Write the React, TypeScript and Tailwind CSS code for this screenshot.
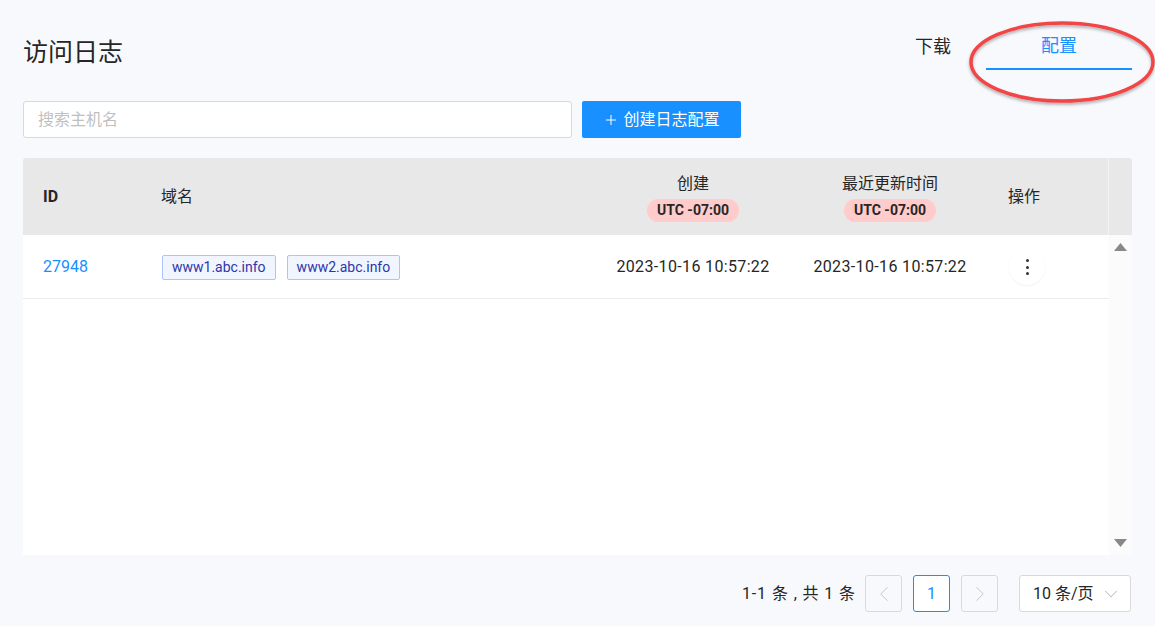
import React from "react";
import { ChevronLeft, ChevronRight, ChevronDown, Plus } from "lucide-react";

const FONT = 'Roboto, "Noto Sans CJK SC", "Noto Sans", sans-serif';

function Badge() {
  return (
    <span className="inline-flex h-[23px] items-center rounded-full bg-[#ffcccb] px-[10px] text-[14px] font-bold leading-none text-[#262626]">
      UTC -07:00
    </span>
  );
}

function Tag({ children }: { children: React.ReactNode }) {
  return (
    <span className="inline-flex h-[25px] items-center rounded-[2px] border border-[#a9c4ff] bg-[#f0f5ff] px-[9px] text-[14px] text-[#2f35a8]">
      {children}
    </span>
  );
}

export default function App() {
  return (
    <div
      className="relative h-[626px] w-[1155px] overflow-hidden bg-[#f8f9fd] px-[23px] text-[#262626]"
      style={{ fontFamily: FONT }}
    >
      {/* header */}
      <div className="flex h-[70px] items-end justify-between">
        <div className="flex h-[48px] items-center pt-[12px] text-[25px] leading-none text-[#262626]">访问日志</div>
        <div className="flex h-[48px]">
          <div className="flex h-[48px] w-[106px] items-center justify-center text-[18px] text-[#262626]">下载</div>
          <div className="flex h-[48px] w-[146px] items-center justify-center border-b-2 border-[#1890ff] text-[18px] text-[#1890ff]">
            配置
          </div>
        </div>
      </div>

      {/* search row */}
      <div className="mt-[31px] flex h-[37px] gap-[10px]">
        <div className="flex w-[549px] items-center rounded-[3px] border border-[#d9d9d9] bg-white px-[14px] text-[16px] text-[#bfbfbf]">
          搜索主机名
        </div>
        <button className="flex w-[159px] items-center justify-center gap-[4px] rounded-[2px] bg-[#1890ff] text-[16px] text-white">
          <Plus size={16} strokeWidth={1.5} />
          创建日志配置
        </button>
      </div>

      {/* table */}
      <div className="mt-[20px] overflow-hidden rounded-t-[3px]">
        <div className="flex h-[77px]">
          <div className="flex w-[1085px] items-center bg-[#e8e8e8] pt-[1px] text-[16px]">
            <div className="w-[119px] pl-[20px] font-bold">ID</div>
            <div className="w-[452px] pl-[19px]">域名</div>
            <div className="flex w-[198px] flex-col items-center gap-[4px]">
              <span className="leading-[22px]">创建</span>
              <Badge />
            </div>
            <div className="flex w-[196px] flex-col items-center gap-[4px]">
              <span className="leading-[22px]">最近更新时间</span>
              <Badge />
            </div>
            <div className="w-[120px] pl-[20px]">操作</div>
          </div>
          <div className="w-[1px] bg-[#f3f3f3]" />
          <div className="w-[23px] bg-[#e8e8e8]" />
        </div>
        <div className="flex h-[320px]">
          <div className="w-[1086px] bg-white">
            <div className="flex h-[64px] items-center border-b border-[#ececec] pt-[1px]">
              <div className="w-[119px] pl-[20px] text-[16px] text-[#1890ff]">27948</div>
              <div className="flex w-[452px] gap-[11px] pl-[20px]">
                <Tag>www1.abc.info</Tag>
                <Tag>www2.abc.info</Tag>
              </div>
              <div className="w-[198px] text-center text-[16px] tracking-[0.35px]">2023-10-16 10:57:22</div>
              <div className="w-[196px] text-center text-[16px] tracking-[0.35px]">2023-10-16 10:57:22</div>
              <div className="w-[121px] pl-[21px]">
                <div className="flex h-[36px] w-[36px] flex-col items-center justify-center gap-[3.5px] rounded-full bg-white shadow-[0_1px_2px_rgba(0,0,0,0.06)]">
                  <span className="h-[3px] w-[3px] rounded-full bg-[#333]" />
                  <span className="h-[3px] w-[3px] rounded-full bg-[#333]" />
                  <span className="h-[3px] w-[3px] rounded-full bg-[#333]" />
                </div>
              </div>
            </div>
          </div>
          <div className="flex w-[23px] flex-col items-center justify-between bg-[#fbfbfb] py-[8px]">
            <svg width="13" height="8" viewBox="0 0 13 8">
              <polygon points="6.5,0 13,8 0,8" fill="#888" />
            </svg>
            <svg width="13" height="8" viewBox="0 0 13 8">
              <polygon points="0,0 13,0 6.5,8" fill="#888" />
            </svg>
          </div>
        </div>
      </div>

      {/* pagination */}
      <div className="mt-[20px] flex h-[37px] items-center justify-end pr-[1px] text-[16px]">
        <span className="mr-[9px] tracking-[0.9px] text-[#262626]">1-1 条 , 共 1 条</span>
        <div className="flex h-[37px] w-[37px] items-center justify-center rounded-[3px] border border-[#d9d9d9] text-[#c4c4c4]">
          <ChevronLeft size={26} strokeWidth={0.9} />
        </div>
        <div className="ml-[11px] flex h-[37px] w-[37px] items-center justify-center rounded-[3px] border border-[#1890ff] bg-white text-[#1890ff]">
          1
        </div>
        <div className="ml-[11px] flex h-[37px] w-[37px] items-center justify-center rounded-[3px] border border-[#d9d9d9] text-[#c4c4c4]">
          <ChevronRight size={26} strokeWidth={0.9} />
        </div>
        <div className="ml-[21px] flex h-[37px] w-[112px] items-center justify-between rounded-[3px] border border-[#d9d9d9] bg-white pl-[13px] pr-[8px]">
          <span className="text-[#262626]">10 条/页</span>
          <ChevronDown size={22} strokeWidth={1.1} className="text-[#bfbfbf]" />
        </div>
      </div>

      {/* annotation ellipse */}
      <svg
        className="pointer-events-none absolute left-[964px] top-[16px]"
        width="196"
        height="94"
        viewBox="0 0 196 94"
      >
        <defs>
          <filter id="sh" x="-10%" y="-20%" width="120%" height="140%">
            <feDropShadow dx="0" dy="2" stdDeviation="1.5" floodColor="#000" floodOpacity="0.3" />
          </filter>
        </defs>
        <ellipse cx="98" cy="46" rx="91" ry="39" fill="none" stroke="#f24444" strokeWidth="3.5" filter="url(#sh)" />
      </svg>
    </div>
  );
}
